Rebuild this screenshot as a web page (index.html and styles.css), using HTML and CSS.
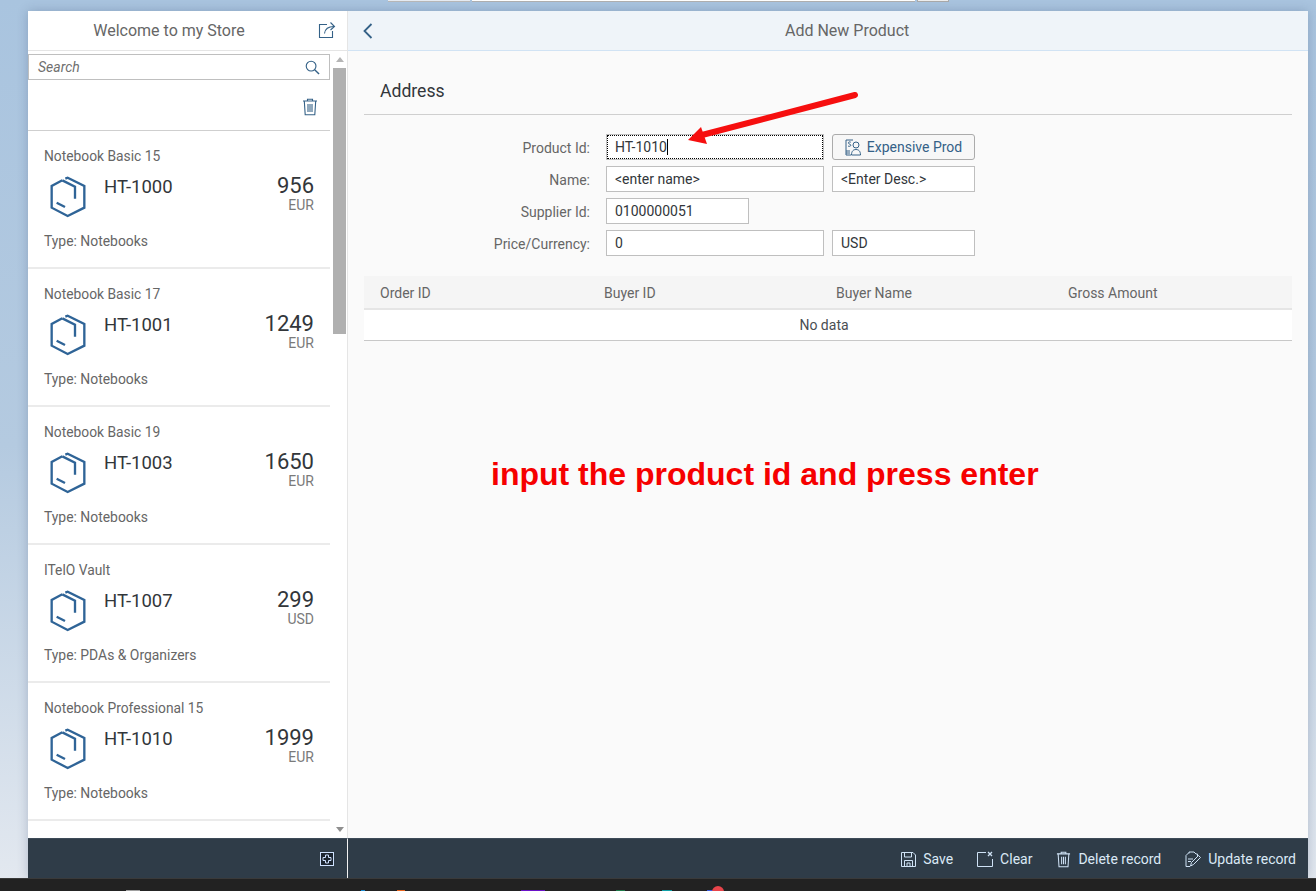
FILE: index.html
```html
<!DOCTYPE html>
<html lang="en">
<head>
    <meta charset="UTF-8">
    <meta name="viewport" content="width=device-width, initial-scale=1.0">
    <title>Welcome to my Store</title>
    <link rel="stylesheet" href="styles.css">
</head>
<body>
    <div class="top-strip">
        <span class="strip-tab"></span>
        <span class="strip-url"></span>
        <span class="strip-btn"></span>
    </div>

    <div class="app">
        <aside class="master">
            <header class="master-head">
                <span class="master-title">Welcome to my Store</span>
                <svg class="share-icon" width="18" height="18" viewBox="0 0 18 18" fill="none" stroke="#346187" stroke-width="1.1">
                    <path d="M9 3.5H1.5V16.5H14.5V10"/>
                    <path d="M6.5 12.5C7 8 9.5 5.5 16 5.5"/>
                    <path d="M12.5 1.5L16.5 5.5L12.5 9"/>
                </svg>
            </header>
            <div class="master-body">
                <div class="master-list">
                    <div class="search">
                        <span class="search-text">Search</span>
                        <svg width="15" height="15" viewBox="0 0 16 16" fill="none" stroke="#346187" stroke-width="1.2">
                            <circle cx="6.5" cy="6.5" r="5.2"/>
                            <path d="M10.3 10.3L15 15" stroke-width="1.5"/>
                        </svg>
                    </div>
                    <div class="list-tools">
                        <svg width="16" height="18" viewBox="0 0 16 18" fill="none" stroke="#346187" stroke-width="1.1">
                            <path d="M1 3H15M5.5 3V1.2H10.5V3"/>
                            <path d="M2.3 3L3.2 16.8H12.8L13.7 3"/>
                            <path d="M6 6V14M8 6V14M10 6V14"/>
                        </svg>
                    </div>

                    <div class="item">
                        <div class="item-name">Notebook Basic 15</div>
                        <div class="item-main">
                            <svg class="item-icon" width="37" height="42" viewBox="60 32 111 126" fill="none" stroke="#2f6497" stroke-width="7"><path d="M97 45L65 62V127L113 152L163 127V62L113 37L106 40"/><path d="M97 45L135 64V100"/><path d="M80 112L105 125"/></svg>
                            <span class="item-id">HT-1000</span>
                            <div class="item-price"><div class="price-num">956</div><div class="price-cur">EUR</div></div>
                        </div>
                        <div class="item-type">Type: Notebooks</div>
                    </div>
                    <div class="item">
                        <div class="item-name">Notebook Basic 17</div>
                        <div class="item-main">
                            <svg class="item-icon" width="37" height="42" viewBox="60 32 111 126" fill="none" stroke="#2f6497" stroke-width="7"><path d="M97 45L65 62V127L113 152L163 127V62L113 37L106 40"/><path d="M97 45L135 64V100"/><path d="M80 112L105 125"/></svg>
                            <span class="item-id">HT-1001</span>
                            <div class="item-price"><div class="price-num">1249</div><div class="price-cur">EUR</div></div>
                        </div>
                        <div class="item-type">Type: Notebooks</div>
                    </div>
                    <div class="item">
                        <div class="item-name">Notebook Basic 19</div>
                        <div class="item-main">
                            <svg class="item-icon" width="37" height="42" viewBox="60 32 111 126" fill="none" stroke="#2f6497" stroke-width="7"><path d="M97 45L65 62V127L113 152L163 127V62L113 37L106 40"/><path d="M97 45L135 64V100"/><path d="M80 112L105 125"/></svg>
                            <span class="item-id">HT-1003</span>
                            <div class="item-price"><div class="price-num">1650</div><div class="price-cur">EUR</div></div>
                        </div>
                        <div class="item-type">Type: Notebooks</div>
                    </div>
                    <div class="item">
                        <div class="item-name">ITelO Vault</div>
                        <div class="item-main">
                            <svg class="item-icon" width="37" height="42" viewBox="60 32 111 126" fill="none" stroke="#2f6497" stroke-width="7"><path d="M97 45L65 62V127L113 152L163 127V62L113 37L106 40"/><path d="M97 45L135 64V100"/><path d="M80 112L105 125"/></svg>
                            <span class="item-id">HT-1007</span>
                            <div class="item-price"><div class="price-num">299</div><div class="price-cur">USD</div></div>
                        </div>
                        <div class="item-type">Type: PDAs &amp; Organizers</div>
                    </div>
                    <div class="item">
                        <div class="item-name">Notebook Professional 15</div>
                        <div class="item-main">
                            <svg class="item-icon" width="37" height="42" viewBox="60 32 111 126" fill="none" stroke="#2f6497" stroke-width="7"><path d="M97 45L65 62V127L113 152L163 127V62L113 37L106 40"/><path d="M97 45L135 64V100"/><path d="M80 112L105 125"/></svg>
                            <span class="item-id">HT-1010</span>
                            <div class="item-price"><div class="price-num">1999</div><div class="price-cur">EUR</div></div>
                        </div>
                        <div class="item-type">Type: Notebooks</div>
                    </div>
                </div>
                <div class="scrollbar">
                    <span class="scroll-up"></span>
                    <span class="scroll-thumb"></span>
                    <span class="scroll-down"></span>
                </div>
            </div>
            <footer class="master-foot">
                <svg width="14" height="14" viewBox="0 0 14 14" fill="#1c2530" stroke="#cfe2ff" stroke-width="1">
                    <rect x="0.5" y="0.5" width="13" height="13"/>
                    <path d="M5.5 3H8.5V5.5H11V8.5H8.5V11H5.5V8.5H3V5.5H5.5Z"/>
                </svg>
            </footer>
        </aside>

        <main class="detail">
            <header class="detail-head">
                <svg class="back-icon" width="10" height="16" viewBox="0 0 10 16" fill="none" stroke="#346187" stroke-width="1.8">
                    <path d="M8.5 1L1.5 8L8.5 15"/>
                </svg>
                <span class="detail-title">Add New Product</span>
            </header>
            <div class="detail-body">
                <h2 class="section-title">Address</h2>
                <div class="form">
                    <label class="form-label">Product Id:</label>
                    <div class="input input-focus input-wide">HT-1010<span class="caret"></span></div>
                    <button class="btn" type="button">
                        <svg width="16" height="17" viewBox="0 0 16 17" fill="none" stroke="#346187" stroke-width="1">
                            <path d="M8 1H1V16H6"/>
                            <path d="M1 12H5M1 14H5"/>
                            <path d="M5.8 3.2C4.6 2.5 3 3 3.4 4.2C3.8 5.3 5.8 5 5.8 6.3C5.8 7.4 4 7.6 3 7"/>
                            <circle cx="11" cy="6" r="3"/>
                            <path d="M6.5 16C6.5 12 8.5 10.5 11 10.5C13.5 10.5 15.5 12 15.5 16Z"/>
                        </svg>
                        Expensive Prod
                    </button>

                    <label class="form-label">Name:</label>
                    <div class="input input-wide">&lt;enter name&gt;</div>
                    <div class="input input-side">&lt;Enter Desc.&gt;</div>

                    <label class="form-label">Supplier Id:</label>
                    <div class="input input-short">0100000051</div>

                    <label class="form-label">Price/Currency:</label>
                    <div class="input input-wide">0</div>
                    <div class="input input-side">USD</div>
                </div>

                <div class="table">
                    <div class="table-head">
                        <span class="col col-first">Order ID</span>
                        <span class="col">Buyer ID</span>
                        <span class="col">Buyer Name</span>
                        <span class="col">Gross Amount</span>
                    </div>
                    <div class="table-empty">No data</div>
                </div>
            </div>
            <footer class="detail-foot">
                <span class="foot-btn">
                    <svg width="15" height="15" viewBox="0 0 15 15" fill="none" stroke="#cfe2f5" stroke-width="1">
                        <path d="M0.5 0.5H12L14.5 3V14.5H0.5Z"/>
                        <path d="M3.5 0.5V5H10.5V0.5"/>
                        <path d="M3.5 14.5V8.5H11.5V14.5M6 14.5V11H9V14.5"/>
                    </svg>
                    Save
                </span>
                <span class="foot-btn">
                    <svg width="16" height="16" viewBox="0 0 16 16" fill="none" stroke="#cfe2f5" stroke-width="1">
                        <path d="M9 1.5H0.5V15.5H15.5V8"/>
                        <path d="M11 1L15 5M15 1L11 5" stroke-width="1.3"/>
                    </svg>
                    Clear
                </span>
                <span class="foot-btn">
                    <svg width="15" height="17" viewBox="0 0 16 18" fill="none" stroke="#cfe2f5" stroke-width="1.1">
                        <path d="M1 3H15M5.5 3V1.2H10.5V3"/>
                        <path d="M2.3 3L3.2 16.8H12.8L13.7 3"/>
                        <path d="M6 6V14M8 6V14M10 6V14"/>
                    </svg>
                    Delete record
                </span>
                <span class="foot-btn">
                    <svg width="16" height="16" viewBox="0 0 16 16" fill="none" stroke="#cfe2f5" stroke-width="1">
                        <path d="M4 2.5V1H9L11 3H12.5V5M5 15.5H1V4.5L4 1.5"/>
                        <path d="M5.5 15L6.5 11.5L13.5 4.5L15.5 6.5L8.5 13.5Z"/>
                        <path d="M3 8H8M3 10.5H6"/>
                    </svg>
                    Update record
                </span>
            </footer>
        </main>
    </div>

    <div class="taskbar">
        <span class="task-bit bit-a"></span>
        <span class="task-bit bit-b"></span>
        <span class="task-bit bit-c"></span>
        <span class="task-bit bit-d"></span>
        <span class="task-bit bit-e"></span>
        <span class="task-bit bit-f"></span>
        <span class="task-bit bit-g"></span>
        <span class="task-badge"></span>
    </div>

    <!-- annotation drawn on top of the screenshot -->
    <svg class="note-arrow" width="1316" height="891" viewBox="0 0 1316 891">
        <path d="M855 95L702 135" stroke="#f60f0f" stroke-width="6" stroke-linecap="round"/>
        <path d="M688 140L701 127L707 144Z" fill="#f60f0f"/>
    </svg>
    <div class="note-text">input the product id and press enter</div>
</body>
</html>
```

FILE: styles.css
```css
* {
    box-sizing: border-box;
}

body {
    margin: 0;
    height: 891px;
    overflow: hidden;
    display: flex;
    flex-direction: column;
    font-family: 'Roboto', 'Liberation Sans', sans-serif;
    font-size: 14px;
    color: #32363a;
    background: linear-gradient(180deg, #a9c4df 0%, #b4cae0 50%, #e4e9f0 100%);
}

.top-strip {
    height: 11px;
    flex: none;
    display: flex;
    padding-left: 388px;
    gap: 2px;
    align-items: flex-start;
}

.strip-tab {
    width: 82px;
    height: 2px;
    background: #e6ebf2;
    border-bottom: 1px solid #b8b8b8;
}

.strip-url {
    width: 443px;
    height: 2px;
    background: #fff;
    border-bottom: 1px solid #b0b0b0;
}

.strip-btn {
    width: 32px;
    height: 2px;
    background: #eee;
    border: 1px solid #aaa;
    border-top: none;
}

.app {
    flex: 1;
    min-height: 0;
    margin: 0 8px 0 28px;
    display: flex;
    box-shadow: 0 0 10px rgba(40, 60, 90, 0.25);
}

/* left pane */
.master {
    width: 320px;
    flex: none;
    display: flex;
    flex-direction: column;
    background: #fff;
    border-right: 1px solid #e5e5e5;
}

.master-head {
    height: 40px;
    flex: none;
    display: flex;
    align-items: center;
    justify-content: center;
    position: relative;
    border-bottom: 1px solid #e5e5e5;
}

.master-title {
    font-size: 16px;
    color: #666;
    margin-right: 37px;
}

.share-icon {
    position: absolute;
    right: 11px;
    top: 10px;
}

.master-body {
    flex: 1;
    min-height: 0;
    display: flex;
    overflow: hidden;
}

.master-list {
    width: 302px;
    flex: none;
    padding-top: 3px;
}

.search {
    height: 26px;
    border: 1px solid #bfbfbf;
    display: flex;
    align-items: center;
    justify-content: space-between;
    padding: 0 9px 0 9px;
}

.search-text {
    font-size: 14px;
    font-style: italic;
    color: #6f6f6f;
}

.list-tools {
    height: 51px;
    display: flex;
    align-items: center;
    justify-content: flex-end;
    padding: 3px 12px 0 0;
    border-bottom: 1px solid #cfcfcf;
}

.item {
    height: 138px;
    padding: 17px 16px 0;
    border-bottom: 2px solid #ebebeb;
}

.item-name {
    font-size: 13.8px;
    line-height: 17px;
    color: #666;
}

.item-main {
    display: flex;
    align-items: flex-start;
    height: 57px;
    margin-top: 11px;
}

.item-icon {
    margin: 0 17px 0 6px;
}

.item-id {
    font-size: 18.5px;
    line-height: 22px;
    color: #32363a;
}

.item-price {
    margin-left: auto;
    text-align: right;
}

.price-num {
    font-size: 22px;
    line-height: 20px;
    color: #32363a;
}

.price-cur {
    font-size: 14px;
    line-height: 18px;
    color: #7a7a7a;
}

.item-type {
    font-size: 13.9px;
    line-height: 17px;
    color: #666;
}

.scrollbar {
    flex: 1;
    display: flex;
    flex-direction: column;
    align-items: center;
    padding: 6px 0 6px 2px;
}

.scroll-up {
    width: 0;
    height: 0;
    border: 4px solid transparent;
    border-top: none;
    border-bottom: 5px solid #b5b5b5;
}

.scroll-thumb {
    width: 13px;
    height: 266px;
    margin-top: 6px;
    background: #b0b0b0;
}

.scroll-down {
    width: 0;
    height: 0;
    margin-top: auto;
    border: 4px solid transparent;
    border-bottom: none;
    border-top: 5px solid #8f8f8f;
}

.master-foot {
    height: 40px;
    flex: none;
    margin-right: -1px;
    border-right: 1px solid #f2f2f2;
    display: flex;
    align-items: center;
    justify-content: flex-end;
    padding: 1px 13px 0 0;
    background: #2f3c48;
    border-top: 1px solid #3d4b58;
}

/* right pane */
.detail {
    flex: 1;
    min-width: 0;
    display: flex;
    flex-direction: column;
    background: #fafafa;
}

.detail-head {
    height: 40px;
    flex: none;
    display: flex;
    align-items: center;
    position: relative;
    padding-left: 15px;
    background: #eff4f9;
    border-bottom: 1px solid #d1e3f4;
}

.detail-title {
    position: absolute;
    left: 437px;
    font-size: 16px;
    color: #666;
}

.detail-body {
    flex: 1;
    min-height: 0;
    padding: 0 16px;
}

.section-title {
    margin: 0 0 19px;
    height: 64px;
    padding: 29px 16px 0;
    font-size: 17.6px;
    line-height: 22px;
    font-weight: 400;
    color: #32363a;
    border-bottom: 1px solid #cfcfcf;
}

.form {
    display: grid;
    grid-template-columns: 234px 218px 143px;
    grid-auto-rows: 26px;
    row-gap: 6px;
    column-gap: 8px;
    align-items: center;
    font-size: 14px;
}

.form-label {
    color: #666;
    text-align: right;
    grid-column: 1;
    padding: 1px 8px 0 0;
}

.input {
    height: 26px;
    line-height: 25px;
    padding: 0 8px;
    background: #fff;
    border: 1px solid #bfbfbf;
    color: #32363a;
}

.input-wide {
    grid-column: 2;
}

.input-side {
    grid-column: 3;
}

.input-short {
    grid-column: 2;
    width: 143px;
}

.input-focus {
    border: 1px solid #bfbfbf;
    outline: 1px dotted #000;
    outline-offset: -2px;
}

.caret {
    display: inline-block;
    width: 1px;
    height: 16px;
    vertical-align: -3px;
    background: #000;
}

.btn {
    height: 26px;
    padding: 0;
    display: flex;
    align-items: center;
    justify-content: center;
    gap: 6px;
    font: inherit;
    color: #346187;
    background: #f7f7f7;
    border: 1px solid #ababab;
    border-radius: 3px;
}

.table {
    margin-top: 20px;
}

.table-head {
    height: 34px;
    display: grid;
    grid-template-columns: 224px 232px 232px 1fr;
    align-items: center;
    padding-top: 1px;
    background: #f5f5f5;
    border-bottom: 2px solid #e5e5e5;
    font-size: 14px;
    color: #666;
}

.col {
    padding-left: 16px;
}

.table-empty {
    height: 31px;
    line-height: 31px;
    padding-right: 8px;
    text-align: center;
    font-size: 14px;
    color: #4a4e52;
    background: #fff;
    border-bottom: 1px solid #c8c8c8;
}

.detail-foot {
    height: 40px;
    flex: none;
    display: flex;
    align-items: center;
    justify-content: flex-end;
    gap: 24px;
    padding: 1px 12px 0 0;
    background: #2f3c48;
    border-top: 1px solid #3d4b58;
}

.foot-btn {
    display: flex;
    align-items: center;
    gap: 7px;
    font-size: 14px;
    color: #dbe9f6;
}

/* windows taskbar at the very bottom */
.taskbar {
    height: 13px;
    flex: none;
    position: relative;
    background: #222;
    border-top: 1px solid #3a3a3a;
}

.task-bit {
    position: absolute;
    bottom: 0;
    height: 1px;
}

.bit-a { left: 126px; width: 14px; background: #a0a0a0; }
.bit-b { left: 361px; width: 4px; background: #1c8ad0; }
.bit-c { left: 397px; width: 8px; background: #e8641e; }
.bit-d { left: 521px; width: 24px; background: #6a12c8; }
.bit-e { left: 616px; width: 9px; background: #1f7a4a; }
.bit-f { left: 662px; width: 10px; background: #10a0a8; }
.bit-g { left: 707px; width: 6px; background: #3a5ae0; }

.task-badge {
    position: absolute;
    left: 712px;
    top: 7px;
    width: 12px;
    height: 12px;
    border-radius: 50%;
    background: #e8444a;
}

.note-arrow {
    position: absolute;
    top: 0;
    left: 0;
    pointer-events: none;
}

.note-text {
    position: absolute;
    left: 491px;
    top: 456px;
    font-family: 'Liberation Sans', Arial, sans-serif;
    font-size: 32px;
    line-height: 36px;
    font-weight: 700;
    color: #f60000;
    white-space: nowrap;
}
```
